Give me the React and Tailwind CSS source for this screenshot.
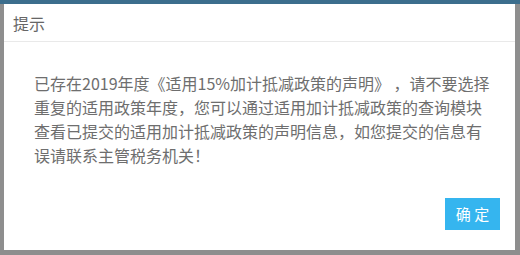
export default function App() {
  const font = { fontFamily: '"Noto Sans CJK SC", "Liberation Sans", sans-serif' };
  return (
    <div
      className="w-[520px] h-[255px] bg-[#8e8e8e] border-t-4 border-[#3c6e8d] pl-[4px] pr-[5px] overflow-hidden"
      style={font}
    >
      <div className="bg-white w-[511px] h-[246px] flex flex-col">
        {/* 标题 */}
        <div className="h-[38px] flex items-center pl-[9px] border-b border-[#e9e9e9] text-[16px] text-[#666]">
          提示
        </div>
        {/* 内容 */}
        <div className="pt-[29px] pl-[30px] text-[16px] leading-[24px] text-[#6e6e6e] whitespace-nowrap">
          <div>已存在2019年度《适用15%加计抵减政策的声明》 ，请不要选择</div>
          <div>重复的适用政策年度，您可以通过适用加计抵减政策的查询模块</div>
          <div>查看已提交的适用加计抵减政策的声明信息，如您提交的信息有</div>
          <div>误请联系主管税务机关！</div>
        </div>
        <div className="flex justify-end pr-[15px] pt-[31px]">
          <button className="w-[55px] h-[32px] bg-[#35b5ef] text-white text-[15px] flex items-center justify-center">
            确 定
          </button>
        </div>
      </div>
    </div>
  );
}
